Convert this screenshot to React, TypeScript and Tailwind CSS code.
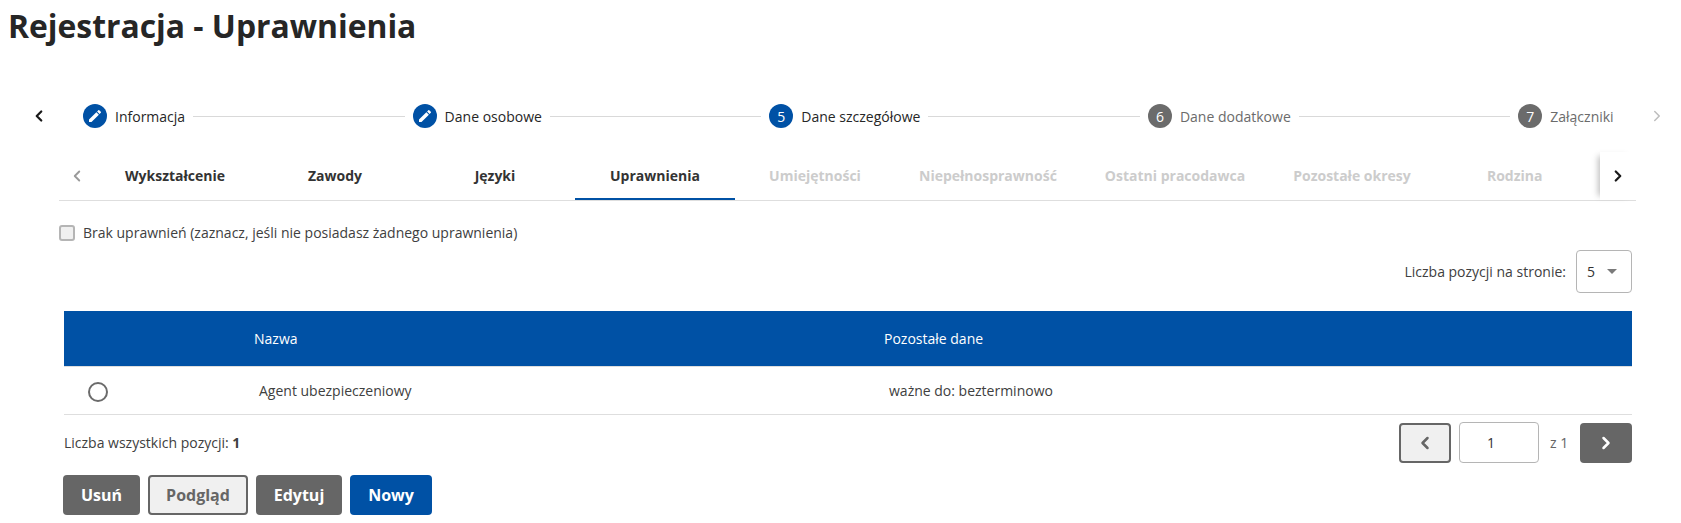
import { ChevronLeft, ChevronRight } from 'lucide-react';

const steps = [
  { label: 'Informacja', done: true },
  { label: 'Dane osobowe', done: true },
  { label: 'Dane szczegółowe', num: '5', current: true },
  { label: 'Dane dodatkowe', num: '6' },
  { label: 'Załączniki', num: '7' },
];

const tabs = [
  { label: 'Wykształcenie', on: true },
  { label: 'Zawody', on: true },
  { label: 'Języki', on: true },
  { label: 'Uprawnienia', on: true, active: true },
  { label: 'Umiejętności' },
  { label: 'Niepełnosprawność' },
  { label: 'Ostatni pracodawca' },
  { label: 'Pozostałe okresy' },
  { label: 'Rodzina' },
];

const EditIcon = () => (
  <svg width="16" height="16" viewBox="0 0 24 24" fill="white">
    <path d="M3 17.25V21h3.75L17.81 9.94l-3.75-3.75L3 17.25zM20.71 7.04a1 1 0 0 0 0-1.41l-2.34-2.34a1 1 0 0 0-1.41 0l-1.83 1.83 3.75 3.75 1.83-1.83z" />
  </svg>
);

const Stepper = () => (
  <div className="flex items-center h-[24px] mt-[57px]">
    <div className="w-[83px] pl-[30px] shrink-0">
      <ChevronLeft size={18} strokeWidth={3} className="text-[#1a1a1a]" />
    </div>
    <div className="flex-1 flex items-center">
      {steps.map((s, i) => (
        <div key={s.label} className="flex items-center">
          <div
            className={
              s.done || s.current
                ? 'w-6 h-6 rounded-full bg-[#0051a5] text-white flex items-center justify-center text-[14px] shrink-0'
                : 'w-6 h-6 rounded-full bg-[#6b6b6b] text-white flex items-center justify-center text-[14px] shrink-0'
            }
          >
            {s.done ? <EditIcon /> : s.num}
          </div>
          <span className={s.done || s.current ? 'ml-2 text-[14px] text-[#262626] whitespace-nowrap' : 'ml-2 text-[14px] text-[#6b6b6b] whitespace-nowrap'}>
            {s.label}
          </span>
          {i < 4 && <div className="w-[211.5px] h-px bg-[#d9d9d9] mx-2" />}
        </div>
      ))}
    </div>
    <div className="w-[33px] shrink-0">
      <ChevronRight size={18} strokeWidth={2} className="text-[#bdbdbd]" />
    </div>
  </div>
);

const Tabs = () => (
  <div className="flex items-stretch h-[49px] mt-[24px] ml-[59px] mr-[45px] border-b border-[#dedede]">
    <div className="w-[36px] shrink-0 flex items-center justify-center">
      <ChevronLeft size={18} strokeWidth={2.5} className="text-[#9a9a9a]" />
    </div>
    <div className="flex-1 flex overflow-hidden">
      {tabs.map((t) => (
        <div
          key={t.label}
          className={
            t.active
              ? 'min-w-[160px] px-6 shrink-0 flex items-center justify-center text-[14px] font-bold text-[#333333] border-b-2 border-[#0051a5] whitespace-nowrap'
              : t.on
                ? 'min-w-[160px] px-6 pb-[2px] shrink-0 flex items-center justify-center text-[14px] font-bold text-[#333333] whitespace-nowrap'
                : 'min-w-[160px] px-6 pb-[2px] shrink-0 flex items-center justify-center text-[14px] font-bold text-[#cccccc] whitespace-nowrap'
          }
        >
          {t.label}
        </div>
      ))}
    </div>
    <div className="w-[36px] shrink-0 flex items-center justify-center bg-white shadow-[-6px_0_6px_-4px_rgba(0,0,0,0.25)]">
      <ChevronRight size={18} strokeWidth={3} className="text-[#1a1a1a]" />
    </div>
  </div>
);

const Button = ({ label, className }: { label: string; className: string }) => (
  <button className={`h-[40px] rounded text-[16px] font-bold flex items-center justify-center ${className}`}>{label}</button>
);

export default function App() {
  return (
    <div className="w-[1681px] h-[523px] bg-white overflow-hidden font-['Open_Sans',sans-serif] text-[#333333]">
      <h1 className="pl-[8px] pt-[5px] text-[31.85px] leading-[42px] font-bold text-[#262626]">Rejestracja - Uprawnienia</h1>

      <Stepper />
      <Tabs />

      <div className="ml-[59px] mt-[24px] flex items-center h-[16px]">
        <div className="w-[16px] h-[16px] rounded-[3px] bg-[#f0f0f0] border-2 border-[#b5b5b5]" />
        <span className="ml-[8px] pb-[2px] text-[14px] text-[#404040]">Brak uprawnień (zaznacz, jeśli nie posiadasz żadnego uprawnienia)</span>
      </div>

      <div className="mr-[49px] mt-[9px] flex items-center justify-end">
        <span className="text-[14px] text-[#404040] mr-[10px]">Liczba pozycji na stronie:</span>
        <div className="w-[56px] h-[43px] border border-[#b5b5b5] rounded flex items-center justify-between pl-[10px] pr-[14px] text-[14px]">
          <span>5</span>
          <span className="w-0 h-0 border-x-[5px] border-x-transparent border-t-[5px] border-t-[#7a7a7a]" />
        </div>
      </div>

      <div className="ml-[64px] mr-[49px] mt-[18px]">
        <div className="h-[56px] bg-[#0051a5] border-b border-[#dedede] text-white text-[14px] font-medium flex items-center">
          <div className="w-[190px] shrink-0" />
          <div className="w-[630px] shrink-0">Nazwa</div>
          <div>Pozostałe dane</div>
        </div>
        <div className="h-[48px] border-b border-[#dedede] pt-[2px] flex items-center text-[14px] text-[#404040]">
          <div className="w-[195px] shrink-0 pl-[24px]">
            <div className="w-[20px] h-[20px] rounded-full border-2 border-[#6b6b6b] bg-white" />
          </div>
          <div className="w-[630px] shrink-0 pb-[2px]">Agent ubezpieczeniowy</div>
          <div className="pb-[2px]">ważne do: bezterminowo</div>
        </div>
        <div className="mt-[7px] flex items-center justify-between h-[41px]">
          <div className="text-[14px] text-[#404040]">
            Liczba wszystkich pozycji: <b className="font-bold">1</b>
          </div>
          <div className="flex items-center self-start">
            <button className="w-[52px] h-[40px] rounded bg-[#f0f0f0] border-2 border-[#666666] flex items-center justify-center text-[#666666]">
              <ChevronLeft size={20} strokeWidth={3} />
            </button>
            <div className="ml-[8px] w-[80px] h-[41px] pr-[16px] rounded border border-[#b5b5b5] flex items-center justify-center text-[14px]">1</div>
            <span className="ml-[11px] text-[14px] text-[#666666] w-[30px]">z 1</span>
            <button className="w-[52px] h-[40px] rounded bg-[#666666] flex items-center justify-center text-white">
              <ChevronRight size={20} strokeWidth={3} />
            </button>
          </div>
        </div>
      </div>

      <div className="ml-[63px] mt-[12px] flex gap-2">
        <Button label="Usuń" className="w-[77px] bg-[#666666] text-white" />
        <Button label="Podgląd" className="w-[100px] bg-[#f0f0f0] text-[#666666] border-2 border-[#666666]" />
        <Button label="Edytuj" className="w-[86px] bg-[#666666] text-white" />
        <Button label="Nowy" className="w-[82px] bg-[#0051a5] text-white" />
      </div>
    </div>
  );
}
